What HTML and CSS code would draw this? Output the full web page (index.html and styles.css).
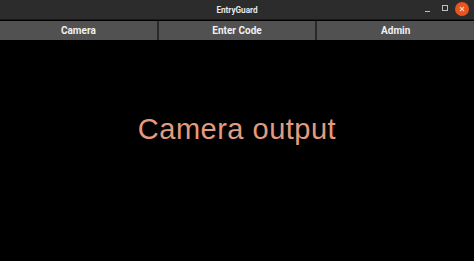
FILE: index.html
```html
<!DOCTYPE html>
<html>
<head>
<meta charset="utf-8">
<link rel="stylesheet" href="styles.css">
</head>
<body>
<div class="window">
  <div class="titlebar">
    <div class="title">EntryGuard</div>
    <div class="controls">
      <span class="ctl min"></span>
      <span class="ctl max"></span>
      <span class="ctl close">
        <svg width="14" height="14" viewBox="0 0 14 14"><circle cx="7" cy="7" r="7" fill="#e9541f"/><path d="M5 5 L9 9 M9 5 L5 9" stroke="#f3d0c0" stroke-width="1.1"/></svg>
      </span>
    </div>
  </div>
  <div class="tabs">
    <div class="tab">Camera</div>
    <div class="tab">Enter Code</div>
    <div class="tab">Admin</div>
  </div>
  <div class="view">
    <div class="output">Camera output</div>
  </div>
</div>
</body>
</html>
```
FILE: styles.css
```css
html, body { margin: 0; padding: 0; background: #000; }
.window { width: 474px; height: 261px; display: flex; flex-direction: column; background: #000; overflow: hidden; }
.titlebar { height: 19px; background: #2c2c2c; position: relative; display: flex; align-items: center; justify-content: center; border-bottom: 1px solid #1a1a1a; }
.title { color: #e6e6e6; font-family: "Roboto", sans-serif; font-weight: bold; font-size: 8.2px; }
.controls { position: absolute; right: 5px; top: 2px; display: flex; align-items: center; height: 14px; }
.ctl { display: block; }
.min { width: 5px; height: 1px; background: #bdbdbd; margin-top: 4px; margin-right: 12px; }
.max { width: 4px; height: 4px; border: 1px solid #bdbdbd; margin-right: 7px; margin-top: -2px; }
.close { width: 14px; height: 14px; }
.close svg { display: block; }
.tabs { display: flex; gap: 2px; height: 19px; margin-top: 1px; background: #2a2a2a; }
.tab { flex: 1; background: #515151; color: #f0f0f0; font-family: "Roboto", sans-serif; font-weight: bold; font-size: 10px; display: flex; align-items: center; justify-content: center; }
.view { flex: 1; display: flex; align-items: center; justify-content: center; padding-bottom: 43px; }
.output { color: #e39b7f; font-family: "Liberation Sans", sans-serif; font-size: 29px; letter-spacing: 0.5px; }
```
